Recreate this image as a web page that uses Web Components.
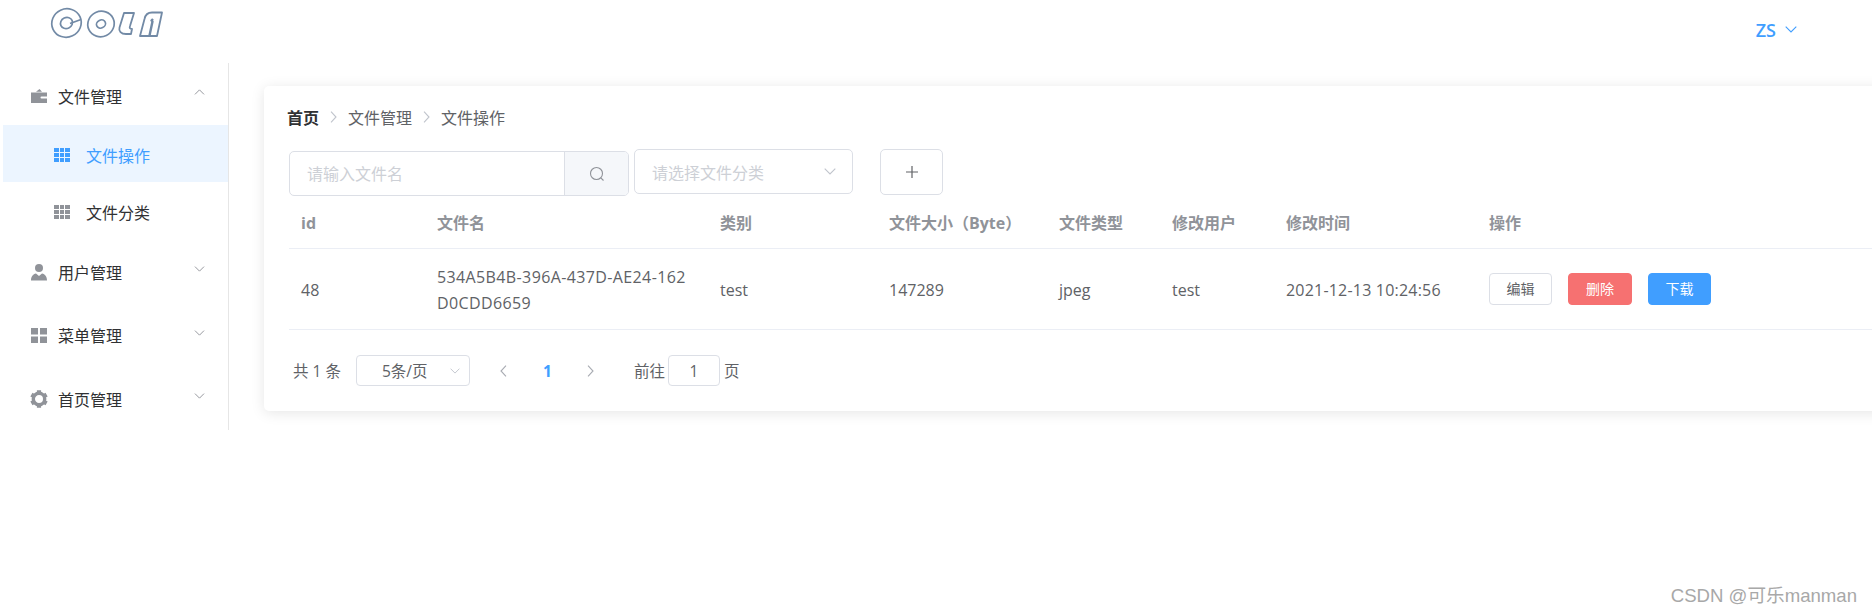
<!DOCTYPE html>
<html lang="zh">
<head>
<meta charset="utf-8">
<title>文件操作</title>
<style>
  html, body { margin: 0; height: 100%; overflow: hidden; background: #fff; }
  body { font: 16px "Open Sans", "Noto Sans CJK SC", sans-serif; color: #606266; position: relative; }
</style>
</head>
<body>
<cola-header></cola-header>
<page-body>
  <side-nav slot="nav">
    <nav-group label="文件管理" icon="wallet" open style="height:62px;padding-top:3px;box-sizing:border-box"></nav-group>
    <nav-sub label="文件操作" active></nav-sub>
    <nav-sub label="文件分类"></nav-sub>
    <nav-group label="用户管理" icon="user" style="margin-top:1px"></nav-group>
    <nav-group label="菜单管理" icon="menu"></nav-group>
    <nav-group label="首页管理" icon="gear"></nav-group>
  </side-nav>
  <file-card slot="main">
    <bread-crumb></bread-crumb>
    <file-toolbar></file-toolbar>
    <file-table></file-table>
    <file-pager></file-pager>
  </file-card>
</page-body>
<water-mark>CSDN @可乐manman</water-mark>

<script>
const chevronDown = (w, h, color) => `<svg width="${w}" height="${h}" viewBox="0 0 12 7" fill="none" stroke="${color}" stroke-width="1.100"><path d="M.7.7 6 6l5.300-5.300"/></svg>`;
const chevronRight = (color, w) => `<svg width="${w || 7}" height="12" viewBox="0 0 7 12" fill="none" stroke="${color}" stroke-width="1.100"><path d="M1 .7 6 6l-5 5.300"/></svg>`;

const ICONS = {
  wallet: `<path fill-rule="evenodd" d="M0 4.500h16V15H0zM10.500 8.500a1 1 0 0 0 0 2H16v-2zM5 3.800 8.500 1 11 3.800z"/>`,
  user: `<circle cx="8" cy="4" r="4"/><path d="M0 16.500c0-4 2-6.500 5-7L8 12l3-2.500c3 .5 5 3 5 7z"/>`,
  menu: `<path d="M0 1h7v6.500H0zM9 1h7v6.500H9zM0 9.500h7V16H0zM9 9.500h7V16H9z"/>`,
  gear: `<circle cx="8" cy="8" r="5.700" fill="none" stroke="#909399" stroke-width="3.400"/>
    <g stroke="#909399" stroke-width="4.200">
      <path d="M8-.8v3M8 13.800v3M.4 3.600 3 5.100M13 10.900l2.600 1.500M.4 12.400 3 10.900M13 5.100l2.600-1.500"/>
    </g>`
};

class ColaHeader extends HTMLElement {
  constructor() {
    super();
    // logo is artwork: two rings stroked twice, the other two closed outlines
    const rings = `
      <ellipse cx="16.500" cy="15" rx="10.500" ry="9.800" transform="rotate(-25 16.500 15)"/>
      <ellipse cx="51" cy="16" rx="9" ry="8.300" transform="rotate(-25 51 16)"/>
    `;
    this.attachShadow({ mode: "open" }).innerHTML = `
      <style>
        :host { display: flex; height: 63px; justify-content: space-between; }
        .logo { margin: 8px 0 0 50px; overflow: visible; }
        .user { display: flex; align-items: center; height: 59px; margin-right: 75px; gap: 9px; color: #409eff; font-weight: 600; font-size: 18px; }
      </style>
      <svg class="logo" width="114" height="32" viewBox="0 0 114 32" fill="none" stroke-linejoin="round">
        <g stroke="#728aa6" stroke-width="10.400">${rings}</g>
        <g stroke="#fff" stroke-width="7">${rings}</g>
        <path d="M20 15.500 31 11.500" stroke="#728aa6" stroke-width="1.800"/>
        <g stroke="#728aa6" stroke-width="1.800" fill="#fff">
          <path d="M74 5h10l-4 13c-.8 2 0 3 2 3l-1 5h-5c-5 0-7.500-3-6.500-6.500z"/>
          <path d="M90 28l4.500-17c1-5 4-6.500 7.500-6.500h10L107 28H90z"/>
        </g>
        <path d="M103 11l-1.500 1.500 1 1-3 14" stroke="#728aa6" stroke-width="2.400"/>
      </svg>
      <div class="user">ZS ${chevronDown(12, 7, "#409eff")}</div>
    `;
  }
}

class PageBody extends HTMLElement {
  constructor() {
    super();
    this.attachShadow({ mode: "open" }).innerHTML = `
      <style>
        :host { display: flex; align-items: flex-start; }
        .nav { flex: none; margin-left: 3px; width: 225px; height: 367px; overflow: hidden; border-right: 1px solid #e6e6e6; }
        .main { flex: none; padding: 23px 0 0 35px; }
      </style>
      <div class="nav"><slot name="nav"></slot></div>
      <div class="main"><slot name="main"></slot></div>
    `;
  }
}

class SideNav extends HTMLElement {
  constructor() {
    super();
    this.attachShadow({ mode: "open" }).innerHTML = `
      <style>:host { display: block; color: #303133; }</style>
      <slot></slot>
    `;
  }
}

class NavGroup extends HTMLElement {
  constructor() {
    super();
    const icon = ICONS[this.getAttribute("icon")];
    const open = this.hasAttribute("open");
    this.attachShadow({ mode: "open" }).innerHTML = `
      <style>
        :host { display: flex; align-items: center; height: 63.5px; padding-left: 28px; color: #303133; position: relative; }
        svg.icon { width: 16px; height: 16px; fill: #909399; margin-right: 11px; flex: none; overflow: visible; }
        .arrow { position: absolute; left: 191px; top: 26px; line-height: 0; }
        .arrow.open { transform: rotate(180deg); }
      </style>
      <svg class="icon" viewBox="0 0 16 16">${icon}</svg>
      <span>${this.getAttribute("label")}</span>
      <span class="arrow ${open ? "open" : ""}">${chevronDown(11, 6, "#909399")}</span>
    `;
  }
}

class NavSub extends HTMLElement {
  constructor() {
    super();
    const active = this.hasAttribute("active");
    const cells = Array.from({ length: 9 }, () => `<i></i>`).join("");
    this.attachShadow({ mode: "open" }).innerHTML = `
      <style>
        :host { display: flex; align-items: center; box-sizing: border-box; height: 57px; padding: 3px 0 0 51px; color: ${active ? "#409eff" : "#303133"}; background: ${active ? "#ecf5ff" : "transparent"}; }
        .grid { display: grid; grid-template-columns: repeat(3, 4.670px); grid-auto-rows: 4.330px; gap: 1px; margin-right: 16px; }
        i { background: ${active ? "#409eff" : "#909399"}; }
      </style>
      <div class="grid">${cells}</div>
      <span>${this.getAttribute("label")}</span>
    `;
  }
}

class FileCard extends HTMLElement {
  constructor() {
    super();
    this.attachShadow({ mode: "open" }).innerHTML = `
      <style>
        :host { display: block; width: 1640px; height: 325px; box-sizing: border-box; padding: 20px 0 0 25px; background: #fff; border-radius: 5px; box-shadow: 0 2px 14px rgba(0,0,0,.1); }
      </style>
      <slot></slot>
    `;
  }
}

class BreadCrumb extends HTMLElement {
  constructor() {
    super();
    const sep = `<span class="sep">${chevronRight("#c0c4cc")}</span>`;
    this.attachShadow({ mode: "open" }).innerHTML = `
      <style>
        :host { display: flex; align-items: center; height: 22px; margin: 0 0 21px -2px; color: #606266; }
        b { color: #303133; font-weight: 600; }
        .sep { width: 29px; display: flex; justify-content: center; }
      </style>
      <b>首页</b>${sep}<span>文件管理</span>${sep}<span>文件操作</span>
    `;
  }
}

class FileToolbar extends HTMLElement {
  constructor() {
    super();
    this.attachShadow({ mode: "open" }).innerHTML = `
      <style>
        :host { display: flex; align-items: flex-start; height: 47px; }
        .box { box-sizing: border-box; border: 1px solid #dcdfe6; border-radius: 5px; color: #cdd0d6; display: flex; align-items: center; background: #fff; }
        .search { width: 340px; height: 45px; margin-top: 2px; overflow: hidden; }
        .search .ph { flex: 1; padding: 0 0 2px 17px; }
        .append { width: 63px; height: 100%; flex: none; display: flex; align-items: center; justify-content: center; background: #f5f7fa; border-left: 1px solid #dcdfe6; }
        .select { width: 219px; height: 45px; margin-left: 5px; padding: 0 16px 0 17px; justify-content: space-between; }
        .add { width: 63px; height: 46px; margin-left: 27px; justify-content: center; }
      </style>
      <div class="box search">
        <span class="ph">请输入文件名</span>
        <span class="append">
          <svg width="16" height="16" viewBox="0 0 16 16" fill="none" stroke="#909399" stroke-width="1.100"><circle cx="7.500" cy="7.500" r="6"/><path d="m11.800 11.800 2.700 2.700"/></svg>
        </span>
      </div>
      <div class="box select"><span>请选择文件分类</span>${chevronDown(12, 7, "#c0c4cc")}</div>
      <div class="box add">
        <svg width="12" height="12" viewBox="0 0 12 12" stroke="#606266" stroke-width="1.200"><path d="M6 0v12M0 6h12"/></svg>
      </div>
    `;
  }
}

class FileTable extends HTMLElement {
  constructor() {
    super();
    const heads = ["id", "文件名", "类别", "文件大小（Byte）", "文件类型", "修改用户", "修改时间", "操作"];
    this.attachShadow({ mode: "open" }).innerHTML = `
      <style>
        :host { display: block; }
        .row { display: grid; grid-template-columns: 136px 283px 169px 170px 113px 114px 203px 1fr; align-items: center; border-bottom: 1px solid #ebeef5; }
        .head { height: 52px; color: #909399; font-weight: 700; }
        .head > div { padding-top: 1px; }
        .body { height: 80px; }
        .row > div { padding-left: 12px; padding-right: 12px; line-height: 26px; }
        .body > div { padding-top: 2px; }
        .body > .file { padding-right: 19px; word-break: break-all; letter-spacing: .38px; }
        .body > .time { letter-spacing: .2px; }
        .body > .ops { display: flex; gap: 16px; padding-top: 0; }
      </style>
      <div class="row head">${heads.map((h) => `<div>${h}</div>`).join("")}</div>
      <div class="row body">
        <div>48</div>
        <div class="file">534A5B4B-396A-437D-AE24-162D0CDD6659</div>
        <div>test</div>
        <div>147289</div>
        <div>jpeg</div>
        <div>test</div>
        <div class="time">2021-12-13 10:24:56</div>
        <div class="ops">
          <el-btn>编辑</el-btn>
          <el-btn kind="danger" style="width:64px">删除</el-btn>
          <el-btn kind="primary">下载</el-btn>
        </div>
      </div>
    `;
  }
}

class ElBtn extends HTMLElement {
  constructor() {
    super();
    const kind = this.getAttribute("kind");
    const bg = kind === "danger" ? "#f67171" : kind === "primary" ? "#409eff" : "#fff";
    const border = kind ? bg : "#dcdfe6";
    this.attachShadow({ mode: "open" }).innerHTML = `
      <style>
        :host { display: inline-flex; box-sizing: border-box; width: 63px; height: 32px; align-items: center; justify-content: center; font-size: 14px; border-radius: 4px; background: ${bg}; border: 1px solid ${border}; color: ${kind ? "#fff" : "#606266"}; }
      </style>
      <slot></slot>
    `;
  }
}

class FilePager extends HTMLElement {
  constructor() {
    super();
    this.attachShadow({ mode: "open" }).innerHTML = `
      <style>
        :host { display: flex; align-items: center; height: 31px; margin: 25px 0 0 4px; font-size: 15.500px; }
        .box { box-sizing: border-box; height: 31px; border: 1px solid #dcdfe6; border-radius: 4px; display: flex; align-items: center; }
        .size { width: 114px; margin-left: 15px; padding-left: 25px; justify-content: space-between; padding-right: 9px; }
        .prev { margin-left: 30px; line-height: 0; }
        .cur { margin-left: 36px; width: 9px; color: #409eff; font-weight: 700; }
        .next { margin-left: 35px; line-height: 0; }
        .go { margin-left: 40px; }
        .jump { width: 52px; justify-content: center; margin: 0 4px 0 3px; }
      </style>
      <span>共 1 条</span>
      <div class="box size"><span>5条/页</span>${chevronDown(10, 6, "#c0c4cc")}</div>
      <span class="prev">${chevronRight("#a8abb2").replace('<path', '<path transform="matrix(-1 0 0 1 7 0)"')}</span>
      <span class="cur">1</span>
      <span class="next">${chevronRight("#a8abb2")}</span>
      <span class="go">前往</span>
      <div class="box jump">1</div>
      <span>页</span>
    `;
  }
}

class WaterMark extends HTMLElement {
  constructor() {
    super();
    this.attachShadow({ mode: "open" }).innerHTML = `
      <style>
        :host { position: absolute; right: 15px; bottom: 7px; font: 18.600px "Liberation Sans", "Noto Sans CJK SC", sans-serif; color: #a8a8a8; }
      </style>
      <slot></slot>
    `;
  }
}

customElements.define("cola-header", ColaHeader);
customElements.define("page-body", PageBody);
customElements.define("side-nav", SideNav);
customElements.define("nav-group", NavGroup);
customElements.define("nav-sub", NavSub);
customElements.define("file-card", FileCard);
customElements.define("bread-crumb", BreadCrumb);
customElements.define("file-toolbar", FileToolbar);
customElements.define("file-table", FileTable);
customElements.define("el-btn", ElBtn);
customElements.define("file-pager", FilePager);
customElements.define("water-mark", WaterMark);
</script>
</body>
</html>
